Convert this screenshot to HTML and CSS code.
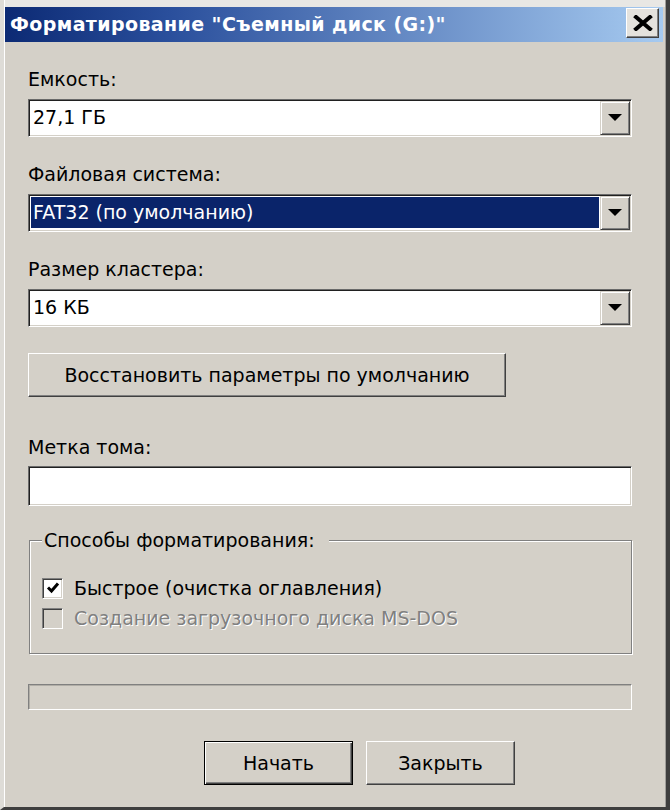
FILE: index.html
```html
<!DOCTYPE html>
<html lang="ru">
<head>
<meta charset="utf-8">
<title>Форматирование</title>
<link rel="stylesheet" href="styles.css">
</head>
<body>
<div class="window">
  <div class="titlebar">
    <span class="title">Форматирование "Съемный диск (G:)"</span>
    <span class="close"><svg width="20" height="16" viewBox="0 0 20 16"><path d="M3 2 L17 14 M17 2 L3 14" stroke="#000" stroke-width="4" stroke-linecap="square" fill="none"/></svg></span>
  </div>
  <div class="content">
    <div class="lbl">Емкость:</div>
    <div class="combo">
      <span class="combo-val">27,1 ГБ</span>
      <span class="combo-btn"><svg width="14" height="8" viewBox="0 0 14 8"><path d="M0 0 H14 L7 7 Z" fill="#000"/></svg></span>
    </div>
    <div class="lbl">Файловая система:</div>
    <div class="combo">
      <span class="combo-val selected">FAT32 (по умолчанию)</span>
      <span class="combo-btn"><svg width="14" height="8" viewBox="0 0 14 8"><path d="M0 0 H14 L7 7 Z" fill="#000"/></svg></span>
    </div>
    <div class="lbl">Размер кластера:</div>
    <div class="combo">
      <span class="combo-val">16 КБ</span>
      <span class="combo-btn"><svg width="14" height="8" viewBox="0 0 14 8"><path d="M0 0 H14 L7 7 Z" fill="#000"/></svg></span>
    </div>
    <div class="btn restore">Восстановить параметры по умолчанию</div>
    <div class="lbl lbl-volume">Метка тома:</div>
    <div class="textfield"></div>
    <fieldset class="group">
      <legend>Способы форматирования:</legend>
      <div class="check-row">
        <span class="checkbox"><svg width="16" height="16" viewBox="0 0 16 16"><path d="M3 7.5 L6.5 11 L13 3.5" stroke="#000" stroke-width="3" fill="none"/></svg></span>
        <span>Быстрое (очистка оглавления)</span>
      </div>
      <div class="check-row disabled">
        <span class="checkbox"></span>
        <span>Создание загрузочного диска MS-DOS</span>
      </div>
    </fieldset>
    <div class="progress"></div>
    <div class="actions">
      <div class="btn default">Начать</div>
      <div class="btn">Закрыть</div>
    </div>
  </div>
</div>
</body>
</html>
```

FILE: styles.css
```css
body {
  margin: 0;
}

.window {
  box-sizing: border-box;
  width: 670px;
  height: 810px;
  background: linear-gradient(#e8e7e4 0 7px, #d4d0c8 7px);
  border-left: 4px solid #dedcd7;
  border-right: 4px solid #3e3e3e;
  border-bottom: 3px solid #3e3e3e;
  padding: 7px 0 0 1px;
  box-shadow: inset 1px 0 #fff, inset -1px 0 #a09e9a;
  font-family: "DejaVu Sans", sans-serif;
  font-size: 19px;
  color: #000;
}

.titlebar {
  height: 35px;
  margin-right: 3px;
  display: flex;
  align-items: flex-start;
  justify-content: space-between;
  background: linear-gradient(to right, #0c2a74 0%, #2a4f9c 25%, #a6caf0 100%);
}

.title {
  color: #fff;
  font-weight: bold;
  font-size: 19px;
  line-height: 35px;
  padding-left: 5px;
  letter-spacing: 0.4px;
}

.close {
  box-sizing: border-box;
  width: 33px;
  height: 30px;
  margin-top: 1px;
  margin-right: 4px;
  display: flex;
  align-items: center;
  justify-content: center;
  background: #e4e2dd;
  border: 1px solid;
  border-color: #fff #404040 #404040 #fff;
  box-shadow: inset -1px -1px #808080;
}

.content {
  padding: 0 34px 0 23px;
  display: flex;
  flex-direction: column;
}

.lbl {
  line-height: 22px;
  margin-top: 26px;
}

.combo {
  box-sizing: border-box;
  height: 38px;
  margin-top: 9px;
  display: flex;
  background: #fff;
  border: 1px solid;
  border-color: #6a6a6a #fff #fff #6a6a6a;
  box-shadow: inset 1px 1px #202020, inset -1px -1px #d4d0c8;
  padding: 1px;
}

.combo-val {
  flex: 1;
  margin: 1px 1px 2px 1px;
  padding-left: 2px;
  line-height: 31px;
}

.combo-val.selected {
  background: #0a246a;
  color: #fff;
}

.combo-btn {
  box-sizing: border-box;
  width: 30px;
  display: flex;
  align-items: center;
  justify-content: center;
  background: #d4d0c8;
  border: 1px solid;
  border-color: #d4d0c8 #404040 #404040 #d4d0c8;
  box-shadow: inset 1px 1px #fff, inset -1px -1px #808080;
}

.btn {
  box-sizing: border-box;
  height: 44px;
  display: flex;
  align-items: center;
  justify-content: center;
  background: #d4d0c8;
  border: 1px solid;
  border-color: #fff #404040 #404040 #fff;
  box-shadow: inset -1px -1px #808080;
}

.restore {
  width: 478px;
  margin-top: 26px;
}

.lbl-volume {
  margin-top: 39px;
}

.textfield {
  box-sizing: border-box;
  height: 40px;
  margin-top: 8px;
  background: #fff;
  border: 1px solid;
  border-color: #6a6a6a #fff #fff #6a6a6a;
  box-shadow: inset 1px 1px #202020, inset -1px -1px #d4d0c8;
}

.group {
  margin: 23px 0 0 1px;
  padding: 22px 12px 20px 12px;
  border: 1px solid #808080;
  box-shadow: 1px 1px 0 #fff, inset 1px 1px 0 #fff;
  min-width: 0;
}

.group legend {
  padding: 0 14px 0 2px;
  line-height: 22px;
  background: #d4d0c8;
}

.check-row {
  display: flex;
  align-items: center;
  gap: 11px;
  height: 30px;
}

.checkbox {
  box-sizing: border-box;
  width: 21px;
  height: 21px;
  display: flex;
  align-items: center;
  justify-content: center;
  background: #fff;
  border: 1px solid;
  border-color: #808080 #fff #fff #808080;
  box-shadow: inset 1px 1px #404040, inset -1px -1px #d4d0c8;
}

.check-row.disabled {
  color: #808080;
  text-shadow: 1px 1px 0 #fff;
}

.check-row.disabled .checkbox {
  background: #d4d0c8;
}

.progress {
  box-sizing: border-box;
  height: 26px;
  margin-top: 30px;
  border: 1px solid;
  border-color: #808080 #fff #fff #808080;
  box-shadow: inset 1px 1px #b0ada6;
}

.actions {
  display: flex;
  gap: 13px;
  margin-top: 31px;
  padding-left: 176px;
}

.actions .btn {
  width: 149px;
}

.btn.default {
  border: 1px solid #000;
  box-shadow: inset 1px 1px #fff, inset -1px -1px #404040, inset -2px -2px #808080;
}
```
